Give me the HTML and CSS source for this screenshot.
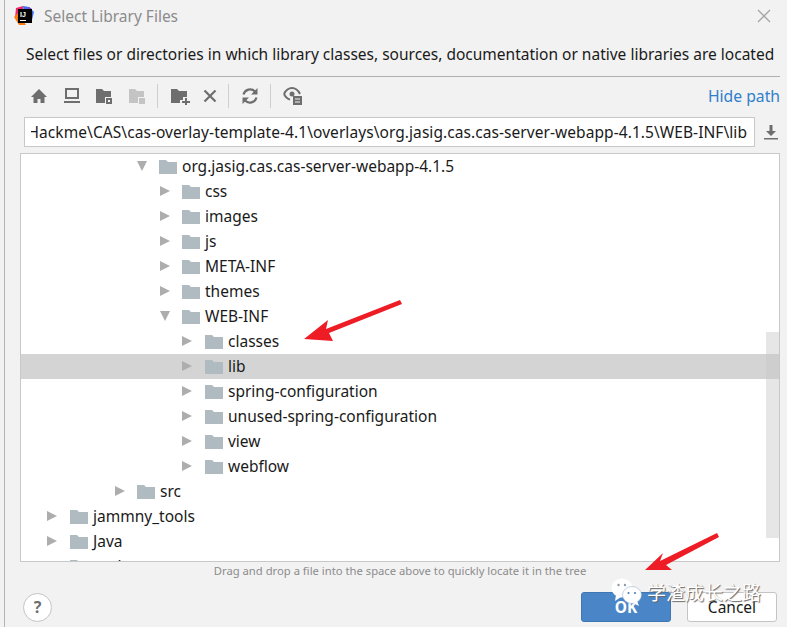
FILE: index.html
```html
<!DOCTYPE html>
<html>
<head>
<meta charset="utf-8"/>
<title>Select Library Files</title>
<link rel="stylesheet" href="styles.css">
</head>
<body>
<svg width="0" height="0" class="defs">
  <symbol id="folder" viewBox="0 0 18 15"><path d="M0 1h7l2 2h9v12H0z" fill="#afbac1"/></symbol>
</svg>
<div class="dialog">
  <div class="titlebar">
    <svg class="logo" width="20" height="20" viewBox="0 0 20 20">
      <path d="M2 2L9 0v8l-8 4z" fill="#f0266f"/>
      <path d="M9 0l6 1 5 5-2 8-8-6z" fill="#3f6ff0"/>
      <path d="M15 1l3 2-1 5-4-3z" fill="#8a3fd0"/>
      <path d="M0 11l5 8 7 0-8-12z" fill="#f97a12"/>
      <rect x="4" y="3" width="14" height="14" fill="#000"/>
      <rect x="6" y="14" width="6" height="1" fill="#fff"/>
      <text x="6" y="11" class="logo-text">IJ</text>
    </svg>
    <span class="title">Select Library Files</span>
    <svg class="close" width="14" height="14" viewBox="0 0 14 14"><path d="M1 1l12 12M13 1L1 13" stroke="#a5a5a5" stroke-width="1.3" fill="none"/></svg>
  </div>
  <p class="desc">Select files or directories in which library classes, sources, documentation or native libraries are located</p>
  <div class="toolbar">
    <svg width="18" height="18" viewBox="0 0 18 18"><path d="M9 2L1 10h2.500v6h4v-4h3v4h4v-6H17z" fill="#6e6e6e"/></svg>
    <svg class="gap-a" width="18" height="18" viewBox="0 0 18 18"><path d="M3 2h12v9H3z" fill="none" stroke="#6e6e6e" stroke-width="2"/><path d="M1 14h16v2H1z" fill="#6e6e6e"/></svg>
    <svg class="gap-a" width="18" height="18" viewBox="0 0 18 18"><path d="M1 2h6l2 2h7v6h-6v6H1z" fill="#6e6e6e"/><path d="M11 11h6v6h-6z" fill="#6e6e6e"/><path d="M13 13h2v2h-2z" fill="#f2f2f2"/></svg>
    <svg class="gap-a" width="18" height="18" viewBox="0 0 18 18"><path d="M1 2h6l2 2h7v6h-6v6H1z" fill="#c4c4c4"/><path d="M11 11h6v6h-6z" fill="#c4c4c4"/></svg>
    <span class="sep"></span>
    <svg width="20" height="18" viewBox="0 0 20 18"><path d="M1 2h6l2 2h8v6h-4v3h-3v3H1z" fill="#6e6e6e"/><path d="M15 11h2v3h3v2h-3v3h-2v-3h-3v-2h3z" fill="#6e6e6e"/></svg>
    <svg class="gap-b" width="14" height="14" viewBox="0 0 14 14"><path d="M1.500 1.500l11 11M12.500 1.500l-11 11" stroke="#6e6e6e" stroke-width="2.200" fill="none"/></svg>
    <span class="sep"></span>
    <svg width="18" height="18" viewBox="0 0 18 18"><path d="M2.500 7.500A6.800 6.800 0 0 1 14 4.500M15.500 10.500A6.800 6.800 0 0 1 4 13.500" stroke="#6e6e6e" stroke-width="2.200" fill="none"/><path d="M16.500 1v6.500H10zM1.500 17v-6.500H8z" fill="#6e6e6e"/></svg>
    <span class="sep"></span>
    <svg width="20" height="20" viewBox="0 0 20 20"><path d="M1 8c2-4 5-6 8-6s6 2 8 6" stroke="#6e6e6e" stroke-width="2" fill="none"/><path d="M1 8c1.500 3 3.500 5 6 5.500" stroke="#6e6e6e" stroke-width="2" fill="none"/><circle cx="9" cy="8" r="2.500" fill="#6e6e6e"/><path d="M10 10h9v9h-9z" fill="#6e6e6e"/><path d="M12 13h5M12 16h5" stroke="#f2f2f2" stroke-width="1.200"/></svg>
    <a class="hide-path">Hide path</a>
  </div>
  <div class="path-row">
    <div class="path-input"><div class="path-clip"><span class="path-text">Hackme\CAS\cas-overlay-template-4.1\overlays\org.jasig.cas.cas-server-webapp-4.1.5\WEB-INF\lib</span></div></div>
    <svg width="16" height="16" viewBox="0 0 16 16"><path d="M6.500 1h3v6H13l-5 5-5-5h3.500z" fill="#6e6e6e"/><path d="M1 14h14v1.500H1z" fill="#6e6e6e"/></svg>
  </div>
  <div class="tree">
    <div class="row lvl4"><i class="tri open"></i><svg class="fld"><use href="#folder"/></svg>org.jasig.cas.cas-server-webapp-4.1.5</div>
    <div class="row lvl5"><i class="tri"></i><svg class="fld"><use href="#folder"/></svg>css</div>
    <div class="row lvl5"><i class="tri"></i><svg class="fld"><use href="#folder"/></svg>images</div>
    <div class="row lvl5"><i class="tri"></i><svg class="fld"><use href="#folder"/></svg>js</div>
    <div class="row lvl5"><i class="tri"></i><svg class="fld"><use href="#folder"/></svg>META-INF</div>
    <div class="row lvl5"><i class="tri"></i><svg class="fld"><use href="#folder"/></svg>themes</div>
    <div class="row lvl5"><i class="tri open"></i><svg class="fld"><use href="#folder"/></svg>WEB-INF</div>
    <div class="row lvl6"><i class="tri"></i><svg class="fld"><use href="#folder"/></svg>classes</div>
    <div class="row lvl6 selected"><i class="tri"></i><svg class="fld"><use href="#folder"/></svg>lib</div>
    <div class="row lvl6"><i class="tri"></i><svg class="fld"><use href="#folder"/></svg>spring-configuration</div>
    <div class="row lvl6"><i class="tri"></i><svg class="fld"><use href="#folder"/></svg>unused-spring-configuration</div>
    <div class="row lvl6"><i class="tri"></i><svg class="fld"><use href="#folder"/></svg>view</div>
    <div class="row lvl6"><i class="tri"></i><svg class="fld"><use href="#folder"/></svg>webflow</div>
    <div class="row lvl3"><i class="tri"></i><svg class="fld"><use href="#folder"/></svg>src</div>
    <div class="row lvl0"><i class="tri"></i><svg class="fld"><use href="#folder"/></svg>jammny_tools</div>
    <div class="row lvl0"><i class="tri"></i><svg class="fld"><use href="#folder"/></svg>Java</div>
    <div class="row lvl0"><i class="tri"></i><svg class="fld"><use href="#folder"/></svg>node</div>
    <div class="scrollbar"></div>
  </div>
  <div class="hint">Drag and drop a file into the space above to quickly locate it in the tree</div>
  <div class="footer">
    <button class="help">?</button>
    <button class="btn ok">OK</button>
    <button class="btn cancel">Cancel</button>
  </div>
</div>

<svg class="arrows" width="787" height="627" viewBox="0 0 787 627">
  <path d="M400 300L326 329L328 320L304 339L333 341L329 333L402 304z" fill="#ee1c25"/>
  <path d="M717 533L660 561L663 553L645 570L672 570L666 565L719 537z" fill="#ee1c25"/>
</svg>

<div class="watermark">
  <svg width="32" height="30" viewBox="0 0 32 30">
    <ellipse cx="11" cy="11" rx="10.500" ry="9.500" fill="#fff"/>
    <path d="M5 18l-1 6 6-4z" fill="#fff"/>
    <ellipse cx="21" cy="18" rx="9.500" ry="8.500" fill="#fff" stroke="#8aa6c8" stroke-width="0.500"/>
    <path d="M26 24l2 5-6-3z" fill="#fff"/>
    <circle cx="7.500" cy="8" r="1.200" fill="#8d9aa8"/><circle cx="14" cy="8" r="1.200" fill="#8d9aa8"/>
    <circle cx="17.500" cy="16" r="1" fill="#3f77b3"/><circle cx="24" cy="16" r="1" fill="#3f77b3"/>
  </svg>
  <span class="wm-text">学渣成长之路</span>
</div>
</body>
</html>
```

FILE: styles.css
```css
body {
  margin: 0;
  width: 787px;
  height: 627px;
  overflow: hidden;
  background-color: #f2f2f2;
  font-family: "Noto Sans", "Open Sans", sans-serif;
  font-size: 15.500px;
  color: #1a1a1a;
  position: relative;
}

.defs {
  display: block;
  height: 0;
}

.dialog {
  height: 627px;
  box-sizing: border-box;
  border-left: 1px solid #b4b4b4;
  margin-left: 4px;
  padding-right: 7px;
  display: flex;
  flex-direction: column;
}

.titlebar {
  height: 32px;
  display: flex;
  align-items: center;
  padding-left: 9px;
}

.logo-text {
  font-family: "Liberation Sans", sans-serif;
  font-size: 7px;
  font-weight: bold;
  fill: #fff;
}

.title {
  margin-left: 10px;
  color: #8c8c8c;
}

.close {
  margin-left: auto;
  margin-right: 9px;
}

.desc {
  margin: 0 0 0 15px;
  padding-left: 6px;
  height: 45px;
  line-height: 44px;
  box-sizing: border-box;
  border-bottom: 1px solid #b0b0b0;
  white-space: nowrap;
}

.toolbar {
  height: 40px;
  box-sizing: border-box;
  padding: 0 0 2px 10px;
  margin-left: 15px;
  display: flex;
  align-items: center;
}

.gap-a {
  margin-left: 14.500px;
}

.gap-b {
  margin-left: 13px;
}

.sep {
  width: 1px;
  height: 24px;
  background: #cfcfcf;
  margin: 0 12px 0 11px;
}

.hide-path {
  margin-left: auto;
  color: #2f7fcb;
  font-size: 15.700px;
}

.path-row {
  display: flex;
  align-items: center;
  margin-left: 19px;
  gap: 8px;
  height: 30px;
}

.path-input {
  width: 731px;
  height: 30px;
  box-sizing: border-box;
  border: 1px solid #c8c8c8;
  background: #fff;
  padding: 0 7px 0 6px;
}

.path-clip {
  height: 100%;
  overflow: hidden;
  white-space: nowrap;
  display: flex;
  justify-content: flex-end;
  align-items: center;
}

.path-text {
  flex: none;
  letter-spacing: 0.065px;
}

.tree {
  margin: 6px 0 0 15px;
  height: 409px;
  width: 760px;
  box-sizing: border-box;
  border: 1px solid #c8c8c8;
  background: #fff;
  overflow: hidden;
  position: relative;
}

.row {
  height: 25px;
  box-sizing: border-box;
  padding-bottom: 1px;
  display: flex;
  align-items: center;
  white-space: nowrap;
}

.selected {
  background: #d4d4d4;
}

.lvl0 { padding-left: 26px; }
.lvl3 { padding-left: 94px; }
.lvl4 { padding-left: 116px; }
.lvl5 { padding-left: 139px; }
.lvl6 { padding-left: 161px; }

.tri {
  width: 0;
  height: 0;
  border-style: solid;
  border-width: 5.500px 0 5.500px 10px;
  border-color: transparent transparent transparent #adadad;
  margin-right: 13px;
}

.lvl3 .tri,
.lvl5 .tri {
  margin-right: 12px;
}

.tri.open,
.lvl5 .tri.open {
  border-width: 10px 5.500px 0 5.500px;
  border-color: #adadad transparent transparent transparent;
  margin-right: 12px;
}

.fld {
  width: 18px;
  height: 15px;
  margin-right: 5px;
  flex: none;
}

.scrollbar {
  position: absolute;
  left: 745px;
  top: 178px;
  width: 13px;
  height: 206px;
  background: rgba(200, 200, 200, 0.45);
}

.hint {
  height: 18px;
  line-height: 18px;
  margin-left: 15px;
  width: 760px;
  text-align: center;
  color: #8c8c8c;
  font-size: 11.250px;
}

.footer {
  display: flex;
  align-items: center;
  margin-top: 12px;
  margin-left: 18px;
}

.help {
  width: 29px;
  height: 29px;
  border-radius: 50%;
  border: 1px solid #c4c4c4;
  background: #fff;
  color: #6e6e6e;
  font-family: inherit;
  font-weight: bold;
  font-size: 16px;
  padding: 0;
  margin-right: 529px;
}

.btn {
  width: 90px;
  height: 30px;
  border-radius: 3px;
  font-family: inherit;
  font-size: 15.500px;
  padding: 0;
}

.ok {
  background: #4a86c7;
  border: 1px solid #3f77b3;
  color: #fff;
  font-weight: bold;
  margin-right: 16px;
}

.cancel {
  background: #fff;
  border: 1px solid #c4c4c4;
  color: #1a1a1a;
}

.arrows {
  position: absolute;
  left: 0;
  top: 0;
  pointer-events: none;
}

.watermark {
  position: absolute;
  left: 611px;
  top: 577px;
  display: flex;
  align-items: center;
}

.wm-text {
  margin-left: 4px;
  font-family: "Noto Sans CJK SC", sans-serif;
  font-size: 19px;
  line-height: 26px;
  color: #fff;
  text-shadow: 1px 1px 1px #666;
}
```
